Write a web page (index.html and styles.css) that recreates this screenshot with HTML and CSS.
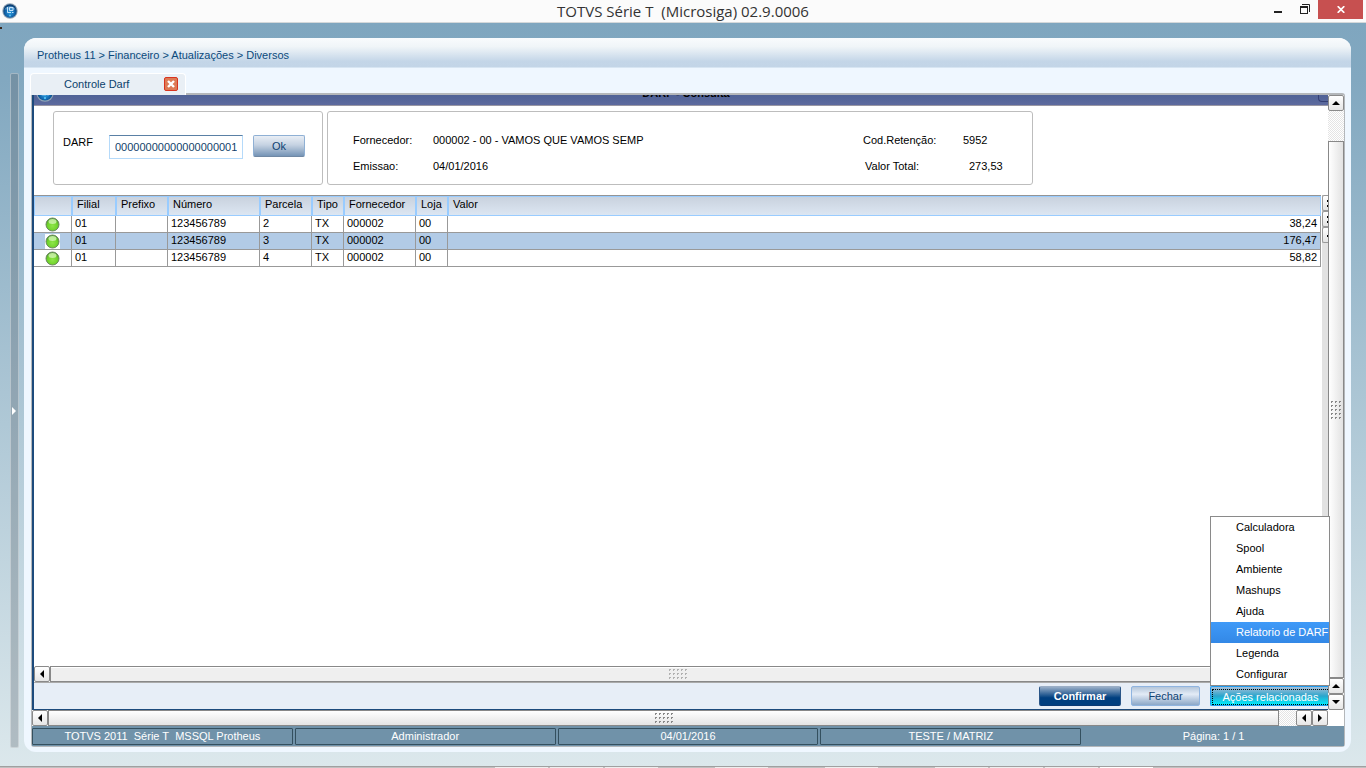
FILE: index.html
```html
<!DOCTYPE html>
<html lang="pt-BR">
<head>
<meta charset="utf-8">
<title>TOTVS Série T (Microsiga) 02.9.0006</title>
<link rel="stylesheet" href="styles.css">
</head>
<body>
<svg class="defs" aria-hidden="true">
  <defs>
    <radialGradient id="orb" cx="50%" cy="60%" r="55%">
      <stop offset="0" stop-color="#2e9fe0"/><stop offset=".6" stop-color="#1268b0"/><stop offset="1" stop-color="#0a3c70"/>
    </radialGradient>
    <radialGradient id="led" cx="50%" cy="60%" r="55%">
      <stop offset="0" stop-color="#8fe64a"/><stop offset=".7" stop-color="#6fd22a"/><stop offset="1" stop-color="#4c9a2a"/>
    </radialGradient>
    <symbol id="logo" viewBox="0 0 16 16">
      <circle cx="8" cy="8" r="7.7" fill="#8fa3b5"/>
      <circle cx="8" cy="8" r="6.7" fill="url(#orb)"/>
      <path d="M2.500 6.500C4 2 12 2 13.500 6.500z" fill="#7fc0ea" opacity=".5"/>
      <path d="M5.500 4v5.500h3.500M7.500 4.500h3.500v3h-3.500zM10 9.500h1.500" fill="none" stroke="#d0eaff" stroke-width=".9"/>
      <circle cx="8" cy="12.500" r="1" fill="#53c2f5"/>
    </symbol>
    <symbol id="dot" viewBox="0 0 15 15">
      <circle cx="7.500" cy="7.500" r="6.500" fill="url(#led)" stroke="#6c8a60" stroke-width="1"/>
      <ellipse cx="7.500" cy="4.500" rx="4" ry="2.500" fill="#d9f7bd" opacity=".75"/>
    </symbol>
    <symbol id="up" viewBox="0 0 8 4"><path d="M4 0L8 4H0z"/></symbol>
    <symbol id="down" viewBox="0 0 8 4"><path d="M0 0H8L4 4z"/></symbol>
    <symbol id="left" viewBox="0 0 4 8"><path d="M4 0V8L0 4z"/></symbol>
    <symbol id="right" viewBox="0 0 4 8"><path d="M0 0V8L4 4z"/></symbol>
    <pattern id="grip-dots" width="4" height="4" patternUnits="userSpaceOnUse">
      <path d="M0 0h2v1h-1v1h-1z" fill="#888"/>
    </pattern>
  </defs>
</svg>

<header class="titlebar">
  <svg class="titlebar-logo"><use href="#logo"/></svg>
  <h1 class="titlebar-text">TOTVS Série T&nbsp; (Microsiga) 02.9.0006</h1>
  <div class="window-buttons">
    <button class="win" aria-label="Minimizar"><svg width="8" height="12"><path d="M0 10h8v2H0z" fill="#222"/></svg></button>
    <button class="win win-restore" aria-label="Restaurar"><svg width="10" height="10"><path d="M2 .5h7.500V8" fill="none" stroke="#222"/><path d="M0 2h8v8H0z" fill="#222"/><path d="M1 4h6v5H1z" fill="#fbfbfb"/></svg></button>
    <button class="win win-close" aria-label="Fechar janela"><svg width="8" height="7"><path d="M.7 .2L7.300 6.800M7.300 .2L.7 6.800" stroke="#fff" stroke-width="1.700"/></svg></button>
  </div>
</header>

<div class="workspace">
  <button class="rail" aria-label="Expandir menu"><svg width="4" height="8"><path d="M0 0V8L4 4z" fill="#fff"/></svg></button>

  <main class="shell">
    <nav class="breadcrumb">Protheus 11 &gt; Financeiro &gt; Atualizações &gt; Diversos</nav>
    <div class="tabs">
      <div class="tab">
        <span>Controle Darf</span>
        <button class="tab-close" aria-label="Fechar aba"><svg width="8" height="8"><path d="M1 1L7 7M7 1L1 7" stroke="#fff" stroke-width="2.400"/></svg></button>
      </div>
    </div>

    <div class="frame">
      <div class="viewport">
        <section class="form">
          <div class="form-title">
            <svg class="form-logo"><use href="#logo"/></svg>
            <h2>DARF - Consulta</h2>
            <span class="form-max"></span>
          </div>

          <div class="form-body">
            <div class="panels">
              <form class="panel panel-search">
                <label for="darf">DARF</label>
                <input id="darf" type="text" value="00000000000000000001">
                <button type="button" class="btn btn-ok">Ok</button>
              </form>
              <dl class="panel panel-info">
                <dt>Fornecedor:</dt><dd>000002 - 00 - VAMOS QUE VAMOS SEMP</dd>
                <dt>Cod.Retenção:</dt><dd>5952</dd>
                <dt>Emissao:</dt><dd>04/01/2016</dd>
                <dt class="shift">Valor Total:</dt><dd class="amount">273,53</dd>
              </dl>
            </div>

            <div class="grid">
              <div class="grid-area">
                <table>
                  <colgroup>
                    <col class="c-led"><col class="c-filial"><col class="c-prefixo"><col class="c-numero"><col class="c-parcela"><col class="c-tipo"><col class="c-forn"><col class="c-loja"><col>
                  </colgroup>
                  <thead>
                    <tr><th></th><th>Filial</th><th>Prefixo</th><th>Número</th><th>Parcela</th><th>Tipo</th><th>Fornecedor</th><th>Loja</th><th>Valor</th></tr>
                  </thead>
                  <tbody>
                    <tr><td><svg class="led"><use href="#dot"/></svg></td><td>01</td><td></td><td>123456789</td><td>2</td><td>TX</td><td>000002</td><td>00</td><td class="num">38,24</td></tr>
                    <tr class="selected"><td><svg class="led"><use href="#dot"/></svg></td><td>01</td><td></td><td>123456789</td><td>3</td><td>TX</td><td>000002</td><td>00</td><td class="num">176,47</td></tr>
                    <tr><td><svg class="led"><use href="#dot"/></svg></td><td>01</td><td></td><td>123456789</td><td>4</td><td>TX</td><td>000002</td><td>00</td><td class="num">58,82</td></tr>
                  </tbody>
                </table>
              </div>
              <div class="side">
                <button class="side-btn" aria-label="Topo"><svg width="2" height="7"><path d="M1 0h1v2H1zM1 5h1v2H1z"/></svg></button>
                <button class="side-btn" aria-label="Acima"><svg width="2" height="7"><path d="M1 0h1v2H1zM1 5h1v2H1z"/></svg></button>
                <button class="side-btn" aria-label="Um acima"><svg width="2" height="7"><path d="M1 3h1v2H1z"/></svg></button>
              </div>
            </div>

            <div class="hbar hbar-inner">
              <button class="arrow" aria-label="Esquerda"><svg width="4" height="8"><use href="#left"/></svg></button>
              <div class="thumb"><svg class="pale" width="18" height="10"><rect width="18" height="10" fill="url(#grip-dots)"/></svg></div>
              <button class="arrow" aria-label="Direita"><svg width="4" height="8"><use href="#right"/></svg></button>
            </div>
          </div>

          <div class="actions">
            <button class="btn btn-primary">Confirmar</button>
            <button class="btn btn-close">Fechar</button>
            <div class="related">
              <button class="btn btn-related"><span>Ações relacionadas</span></button>
              <ul class="menu">
                <li><button>Calculadora</button></li>
                <li><button>Spool</button></li>
                <li><button>Ambiente</button></li>
                <li><button>Mashups</button></li>
                <li><button>Ajuda</button></li>
                <li><button class="active">Relatorio de DARF</button></li>
                <li><button>Legenda</button></li>
                <li><button>Configurar</button></li>
              </ul>
            </div>
          </div>
        </section>

        <div class="vbar">
          <button class="arrow" aria-label="Rolar para cima"><svg width="8" height="4"><use href="#up"/></svg></button>
          <div class="track"></div>
          <div class="thumb"><svg width="11" height="18"><rect width="11" height="18" fill="url(#grip-dots)"/></svg></div>
          <button class="arrow" aria-label="Rolar para cima"><svg width="8" height="4"><use href="#up"/></svg></button>
          <button class="arrow" aria-label="Rolar para baixo"><svg width="8" height="4"><use href="#down"/></svg></button>
        </div>
      </div>

      <div class="hbar hbar-outer">
        <button class="arrow" aria-label="Rolar para a esquerda"><svg width="4" height="8"><use href="#left"/></svg></button>
        <div class="thumb"><svg width="18" height="10"><rect width="18" height="10" fill="url(#grip-dots)"/></svg></div>
        <div class="track"></div>
        <button class="arrow" aria-label="Rolar para a esquerda"><svg width="4" height="8"><use href="#left"/></svg></button>
        <button class="arrow" aria-label="Rolar para a direita"><svg width="4" height="8"><use href="#right"/></svg></button>
      </div>

      <footer class="status">
        <span>TOTVS 2011&nbsp; Série T&nbsp; MSSQL Protheus</span>
        <span>Administrador</span>
        <span>04/01/2016</span>
        <span>TESTE / MATRIZ</span>
        <span class="plain">Página: 1 / 1</span>
      </footer>
    </div>
  </main>
</div>
<div class="taskbar"><i></i><i></i><i class="gap"></i><i class="gap"></i><i class="gap"></i><i></i><i></i><i></i><i class="light"></i></div>
</body>
</html>
```
FILE: styles.css
```css
* { box-sizing: border-box; }
body {
  margin: 0;
  height: 100vh;
  display: flex;
  flex-direction: column;
  overflow: hidden;
  font: 11px/14px "Liberation Sans", Arial, sans-serif;
  color: #000;
  background: linear-gradient(#7fa6bf 22px, #82a8c0 80px, #dce8ec);
}
button, input { font: inherit; margin: 0; padding: 0; border-radius: 0; }
h1, h2, dl, dd, ul { margin: 0; padding: 0; font-size: 11px; font-weight: normal; }
svg { display: block; flex: none; }
.defs { position: absolute; width: 0; height: 0; }

.titlebar {
  flex: none;
  height: 23px;
  display: grid;
  grid-template-columns: 1fr auto 1fr;
  background: #fbfbfb;
  border-bottom: 1px solid #d4d8da;
}
.titlebar-logo { width: 16px; height: 16px; margin: 3px 2px; }
.titlebar-text { font: 15px/23px "Open Sans", "Noto Sans", sans-serif; color: #333; white-space: nowrap; }
.window-buttons { display: flex; justify-content: flex-end; align-items: flex-start; padding-right: 3px; }
.win { height: 19px; width: 26px; border: 0; background: none; display: flex; justify-content: center; padding-top: 1px; }
.win-restore { width: 27px; padding-top: 4px; }
.win-close { width: 45px; height: 19px; padding: 0; align-items: center; background: #c75050; }

.workspace { position: relative; flex: 1; min-height: 0; display: flex; padding: 15px 15px 14px 10px; }
.workspace::before { content: ""; position: absolute; left: 0; top: 4px; width: 2px; height: 2px; background: #3a2a20; }
.rail {
  flex: none;
  width: 9px;
  margin: 35px 5px 4px 0;
  padding-left: 1px;
  display: flex;
  align-items: center;
  border: 1px solid rgba(255,255,255,.35);
  border-radius: 2px;
  background: rgba(90,100,110,.32);
}
.shell {
  flex: 1;
  min-width: 0;
  display: flex;
  flex-direction: column;
  padding: 0 6px 5px 7px;
  border-radius: 12px;
  background: #eff7ff;
  overflow: hidden;
}
.breadcrumb {
  flex: none;
  height: 30px;
  margin: 0 -6px 0 -7px;
  padding-left: 13px;
  line-height: 35px;
  color: #0b4a7c;
  background: linear-gradient(#f9fbfd, #f0f5f8 30%, #c4d6e8 80%, #c3d5e7);
  border-bottom: 1px solid #d7e5f2;
}
.tabs { position: relative; flex: none; padding-top: 5px; margin: 0 0 -2px -1px; }
.tab {
  width: 156px;
  height: 22px;
  display: flex;
  align-items: center;
  justify-content: space-between;
  padding: 0 7px 1px 33px;
  color: #0b3f6c;
  background: #e9eff5;
  border: 1px solid #fff;
  border-bottom: 0;
  border-radius: 4px 4px 0 0;
}
.tab-close {
  width: 14px;
  height: 14px;
  display: flex;
  align-items: center;
  justify-content: center;
  background: #dd7a55;
  border: 1px solid #d8341f;
  border-radius: 2px;
}

.frame {
  flex: 1;
  min-height: 0;
  display: flex;
  flex-direction: column;
  border: 1px solid #b4b7ba;
  border-top-width: 2px;
  border-radius: 0 3px 3px 3px;
  background: #fff;
}
.viewport { flex: 1; min-height: 0; display: flex; }
.form {
  flex: 1;
  min-width: 0;
  display: flex;
  flex-direction: column;
  border: 0 solid #1c4a7c;
  border-width: 0 0 1px 2px;
}
.form-title {
  flex: none;
  height: 11px;
  display: flex;
  align-items: flex-end;
  justify-content: space-between;
  padding-left: 2px;
  overflow: hidden;
  background: linear-gradient(#4f6296, #5d6a9e);
  border-bottom: 1px solid #9a98a4;
}
.form-logo { width: 18px; height: 18px; margin-bottom: 3px; }
.form-title h2 { font-weight: bold; line-height: 14px; margin-bottom: 5px; }
.form-max { width: 10px; height: 14px; margin-bottom: 3px; border: 1px solid #343f74; border-right: 0; border-radius: 0 0 0 4px; }

.form-body { flex: 1; min-height: 0; display: flex; flex-direction: column; }
.panels { flex: none; display: flex; gap: 4px; padding: 5px 19px 10px; }
.panel { height: 74px; border: 1px solid #bdbdbd; border-radius: 3px; }
.panel-search { width: 270px; display: flex; align-items: flex-start; padding: 23px 9px; }
.panel-search label { width: 46px; line-height: 14px; }
.panel-search input {
  width: 134px;
  height: 24px;
  padding: 0 5px;
  color: #123f6b;
  border: 1px solid #b5dafa;
  border-top-color: #5a80a5;
  background: #fff;
}
.btn {
  height: 20px;
  border: 1px solid #8fb4e0;
  border-radius: 2px;
  color: #0f4272;
  background: linear-gradient(#b4c6da, #e3ebf6 40%, #8ca8c8);
}
.btn-ok { width: 52px; height: 22px; margin-left: 10px; background: linear-gradient(#e9eef5, #c5d2e2 45%, #7594b6); border-color: #8fb0d4 #8fb0d4 #7088a4; }
.panel-info {
  width: 706px;
  display: grid;
  grid-template-columns: 80px 430px 100px auto;
  justify-content: start;
  row-gap: 12px;
  padding: 21px 25px;
}
.shift { padding-left: 2px; }
.amount { padding-left: 6px; }

.grid { flex: 1; min-height: 0; display: flex; }
.grid-area { flex: 1; min-width: 0; border-top: 1px solid #949494; }
table { width: 100%; table-layout: fixed; border-collapse: separate; border-spacing: 0; }
.c-led { width: 38px; }
.c-filial { width: 44px; }
.c-prefixo { width: 52px; }
.c-numero { width: 92px; }
.c-parcela { width: 52px; }
.c-tipo { width: 32px; }
.c-forn { width: 72px; }
.c-loja { width: 32px; }
th {
  height: 20px;
  padding: 0 0 4px 4px;
  text-align: left;
  font-weight: normal;
  line-height: 14px;
  background: linear-gradient(#c9d2de, #dce6f2);
  border: 1px solid #99ccff;
  white-space: nowrap;
}
td { height: 17px; padding: 0 3px 2px; line-height: 14px; border: 0 solid #999; border-width: 0 1px 1px 0; }
td:first-child { padding: 0 0 0 11px; }
.num { text-align: right; }
.led { width: 15px; height: 15px; }
.selected { background: #b2cbe6; }
.selected .led { background: #fff; }
.side { width: 7px; display: flex; flex-direction: column; background: #e2e2e2; border-left: 1px solid #fff; }
.side-btn {
  height: 16px;
  display: flex;
  align-items: center;
  justify-content: flex-end;
  border: 1px solid #999;
  border-right: 0;
  border-radius: 2px 0 0 2px;
  background: linear-gradient(#fff, #e4e4e4);
}

.hbar { flex: none; display: flex; }
.arrow {
  flex: none;
  width: 16px;
  height: 16px;
  display: flex;
  align-items: center;
  justify-content: center;
  border: 1px solid #8a8a8a;
  border-radius: 2px;
  background: linear-gradient(#fff, #e6e6e6);
}
.thumb {
  flex: 1;
  display: flex;
  align-items: center;
  justify-content: center;
  border: 1px solid #888;
}
.track { background: repeating-conic-gradient(#e4e4e4 0 25%, #fff 0 50%) 0 0 / 2px 2px; }
.hbar .thumb { height: 16px; background: linear-gradient(#fff, #e4e4e4); }
.hbar .track { width: 17px; }
.hbar-inner { padding-right: 7px; border-bottom: 1px solid #aaa; }
.hbar-inner .thumb { background: #efefef; box-shadow: inset 0 1px #fff; }
.pale { opacity: .6; }
.hbar-outer { padding-right: 16px; }
.vbar { flex: none; width: 16px; display: flex; flex-direction: column; }
.vbar .track { height: 30px; }
.vbar .thumb { background: linear-gradient(90deg, #fff, #e2e2e2); }

.actions {
  flex: none;
  height: 26px;
  display: flex;
  justify-content: flex-end;
  align-items: center;
  gap: 10px;
  background: #e7eef7;
}
.btn-primary { width: 82px; font-weight: bold; color: #fff; border-color: #9aaec6 #2a5688 #0a3a74; background: linear-gradient(#98aec8, #003f7f 60%); }
.btn-close { width: 69px; }
.related { position: relative; }
.btn-related {
  display: block;
  width: 118px;
  padding: 1px 0 0 1px;
  color: #fff;
  border: 1px solid #1e9bf0;
  border-right: 0;
  border-radius: 2px 0 0 2px;
  background: linear-gradient(#a8bfd8, #2aa5cc 50%, #00f0ff);
}
.btn-related span { display: block; height: 16px; line-height: 15px; border: 1px dotted #000; border-right: 0; }
.menu {
  position: absolute;
  right: -2px;
  bottom: 20px;
  width: 120px;
  list-style: none;
  background: #fff;
  border: 1px solid #8a8a8a;
}
.menu button { display: block; width: 100%; height: 21px; padding: 0 0 2px 25px; text-align: left; white-space: nowrap; border: 0; background: none; color: #000; }
.menu .active { color: #fff; background: linear-gradient(#3f9af8, #3388e6); }

.status {
  flex: none;
  height: 20px;
  display: grid;
  grid-template-columns: repeat(5, 1fr);
  gap: 2px;
  padding: 2px 0 1px;
  color: #fff;
  text-align: center;
  background: #7092a9;
}
.status span { border: 1px solid #34505f; line-height: 14px; border-radius: 1px; }
.status .plain { border: 0; line-height: 16px; }

.taskbar { flex: none; height: 2px; display: flex; gap: 2px; padding-left: 495px; border-top: 1px solid #a0a0a0; background: #c0c0c0; }
.taskbar i { width: 53px; height: 1px; background: #eee; }
.taskbar .gap { margin-right: 55px; }
.taskbar .light { background: #fff; }
```
